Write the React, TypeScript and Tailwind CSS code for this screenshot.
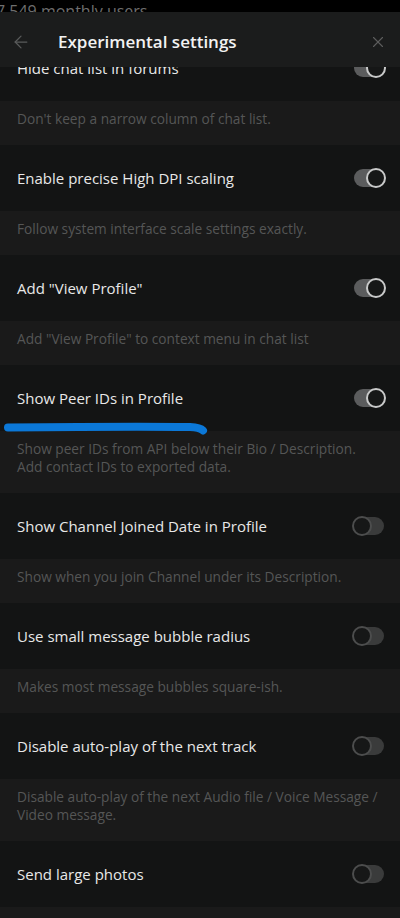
import { ArrowLeft, X } from "lucide-react";

const ROWS = [
  { title: "Hide chat list in forums", on: true, desc: ["Don't keep a narrow column of chat list."] },
  { title: "Enable precise High DPI scaling", on: true, desc: ["Follow system interface scale settings exactly."] },
  { title: 'Add "View Profile"', on: true, desc: ['Add "View Profile" to context menu in chat list'] },
  {
    title: "Show Peer IDs in Profile",
    on: true,
    mark: true,
    desc: ["Show peer IDs from API below their Bio / Description.", "Add contact IDs to exported data."],
  },
  { title: "Show Channel Joined Date in Profile", on: false, desc: ["Show when you join Channel under its Description."] },
  { title: "Use small message bubble radius", on: false, desc: ["Makes most message bubbles square-ish."] },
  {
    title: "Disable auto-play of the next track",
    on: false,
    desc: ["Disable auto-play of the next Audio file / Voice Message /", "Video message."],
  },
  { title: "Send large photos", on: false, desc: [] as string[] },
];

function Toggle({ on }: { on: boolean }) {
  return (
    <div className="relative w-[34px] h-[20px] flex items-center">
      <div className={`mx-[2px] h-[18px] w-[30px] rounded-full ${on ? "bg-[#5b5c5d]" : "bg-[#3a3b3b]"}`} />
      <div
        className={`absolute top-0 w-[20px] h-[20px] rounded-full border-2 bg-[#161717] ${
          on ? "right-0 border-[#c9caca]" : "left-0 border-[#4c4d4d]"
        }`}
      />
    </div>
  );
}

export default function App() {
  return (
    <div className="w-[400px] h-[918px] overflow-hidden bg-black flex flex-col" style={{ fontFamily: '"Open Sans", sans-serif' }}>
      <div className="h-[12px] shrink-0 overflow-hidden">
        <div className="-ml-[4px] mt-[1px] text-[16px] leading-[20px] text-[#6e6e6e] whitespace-nowrap">7 549 monthly users</div>
      </div>

      <div className="h-[55px] shrink-0 bg-[#1b1c1c] flex items-center pt-[5px] relative z-20">
        <ArrowLeft size={20} strokeWidth={1.5} className="ml-[11px] text-[#5a5b5b]" />
        <div className="ml-[27px] text-[17px] font-semibold text-[#f2f2f2] flex-1">Experimental settings</div>
        <X size={18} strokeWidth={1.5} className="mr-[13px] text-[#5d5e5e]" />
      </div>

      <div className="flex-1 overflow-hidden relative">
        <div className="-mt-[32px]">
          {ROWS.map((row) => (
            <div key={row.title}>
              <div className="h-[66px] bg-[#131414] flex items-center justify-between pl-[17px] pr-[14px] relative z-10">
                <span className="text-[15px] text-[#e8e8e8]">{row.title}</span>
                <Toggle on={row.on} />
                {row.mark && (
                  <svg className="absolute left-0 top-[55px]" width="220" height="20" viewBox="0 0 220 20">
                    <path
                      d="M8 7.5 C60 7 140 6.5 190 7 Q200 7.5 203 10.5"
                      fill="none"
                      stroke="#0b78d8"
                      strokeWidth="8"
                      strokeLinecap="round"
                    />
                  </svg>
                )}
              </div>
              <div className="bg-[#1a1a1a] min-h-[44px] px-[17px] pt-[9px] pb-[17px] text-[13.7px] leading-[18px] text-[#555656] whitespace-nowrap">
                {row.desc.map((line) => (
                  <div key={line}>{line}</div>
                ))}
              </div>
            </div>
          ))}
        </div>
      </div>
    </div>
  );
}
